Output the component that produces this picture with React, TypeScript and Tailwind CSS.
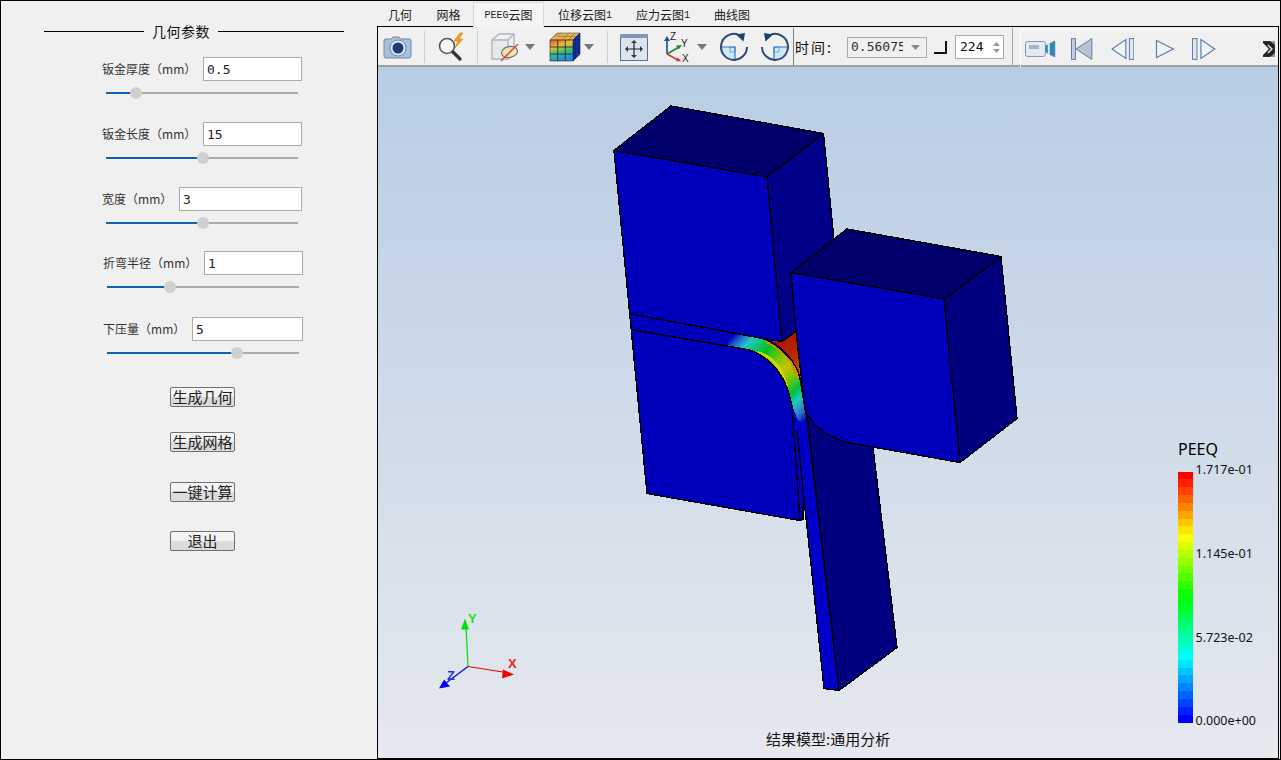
import React from 'react';

const params = [
  { label: '钣金厚度', value: '0.5', inputW: 'w-[99px]', fill: 30, row: 'mt-[16px] ml-[101px] w-[200px]', slider: 'ml-[105px]' },
  { label: '钣金长度', value: '15', inputW: 'w-[99px]', fill: 97, row: 'mt-[28px] ml-[101px] w-[200px]', slider: 'ml-[105px]' },
  { label: '宽度', value: '3', inputW: 'w-[123px]', fill: 97, row: 'mt-[28px] ml-[101px] w-[200px]', slider: 'ml-[105px]' },
  { label: '折弯半径', value: '1', inputW: 'w-[99px]', fill: 63, row: 'mt-[27px] ml-[102px] w-[200px]', slider: 'ml-[106px]' },
  { label: '下压量', value: '5', inputW: 'w-[111px]', fill: 130, row: 'mt-[29px] ml-[102px] w-[200px]', slider: 'ml-[106px]' },
];

const buttons = [
  { text: '生成几何', cls: 'mt-[33px]' },
  { text: '生成网格', cls: 'mt-[25px]' },
  { text: '一键计算', cls: 'mt-[30px]' },
  { text: '退出', cls: 'mt-[29px]' },
];

function Sep() {
  return <div className="w-px h-[32px] bg-[#d0d0d0]" />;
}

function DropArrow({ cls }: { cls: string }) {
  return (
    <svg className={cls} width="10" height="6" viewBox="0 0 10 6">
      <path d="M0 0h10L5 6z" fill="#777" />
    </svg>
  );
}

function CameraIcon() {
  return (
    <svg className="ml-[5px]" width="30" height="32" viewBox="0 0 30 32">
      <path d="M3 8h5l2-2h6l2 2h8a2 2 0 0 1 2 2v15a2 2 0 0 1-2 2H3a2 2 0 0 1-2-2V10a2 2 0 0 1 2-2z" fill="#a9c0dc" stroke="#6c87a8" />
      <circle cx="15" cy="17" r="8" fill="#dfe8f3" stroke="#6c87a8" />
      <circle cx="15" cy="17" r="5.5" fill="#1d3b78" />
    </svg>
  );
}

function ZoomIcon() {
  return (
    <svg className="ml-[10px]" width="32" height="32" viewBox="0 0 32 32">
      <circle cx="12" cy="15" r="7.5" fill="#f7f7f7" stroke="#555" strokeWidth="1.6" />
      <path d="M18 21l7 7" stroke="#333" strokeWidth="3.2" strokeLinecap="round" />
      <path d="M25 2l-6 8h4l-3 7 8-9h-4l4-6z" fill="#f0a020" stroke="#c87810" strokeWidth="0.5" />
    </svg>
  );
}

function CubeIcon() {
  return (
    <svg className="ml-[12px]" width="32" height="32" viewBox="0 0 32 32">
      <path d="M2 9L9 3H24V21L18 28H2z" fill="#f0f0f2" stroke="#aab4c2" strokeWidth="1.4" />
      <path d="M2 9H18V28M18 9L24 3" fill="none" stroke="#aab4c2" strokeWidth="1.4" />
      <path d="M3 10H17V27H3z" fill="#e6e8ec" />
      <ellipse cx="19.500" cy="21" rx="8" ry="5.500" transform="rotate(-12 19.500 21)" fill="#efe3b4" stroke="#6d7480" strokeWidth="1.2" />
      <path d="M11 30L28 13" stroke="#d8481c" strokeWidth="1.3" />
    </svg>
  );
}

function ColorCubeIcon() {
  return (
    <svg className="ml-[14px]" width="32" height="32" viewBox="0 0 32 32">
      <defs>
        <linearGradient id="cubeFront" x1="0" y1="0" x2="0.3" y2="1">
          <stop offset="0" stopColor="#e84a30" />
          <stop offset="0.350" stopColor="#f0c030" />
          <stop offset="0.650" stopColor="#40c070" />
          <stop offset="1" stopColor="#1c90e0" />
        </linearGradient>
      </defs>
      <path d="M1 9l7-7h23l-7 7z" fill="#e8b050" stroke="#556" strokeWidth="0.6" />
      <path d="M8 5.500h23M5 5.500l7-3.500M13 9l7-7M19 9l7-7" stroke="#7a6a40" strokeWidth="0.6" fill="none" />
      <path d="M24 9l7-7v21l-7 7z" fill="#1434a8" stroke="#112" strokeWidth="0.6" />
      <path d="M24 16l7-7M24 23l7-7M26.500 7v21M29 4.500v21" stroke="#0a1a60" strokeWidth="0.6" fill="none" />
      <rect x="1" y="9" width="23" height="21" fill="url(#cubeFront)" stroke="#223" strokeWidth="0.6" />
      <path d="M8.700 9v21M16.300 9v21M1 16h23M1 23h23" stroke="#263040" strokeWidth="0.9" fill="none" />
    </svg>
  );
}

function FitIcon() {
  return (
    <svg className="ml-[11px]" width="30" height="32" viewBox="0 0 30 32">
      <rect x="1.500" y="3.500" width="27" height="26" fill="#dfe3ea" stroke="#566f96" />
      <rect x="1" y="3" width="28" height="4" fill="#7f97b8" />
      <path d="M15 10v15M8 18h14" stroke="#223" strokeWidth="1.200" />
      <path d="M15 9l-3 3h6zM15 27l-3-3h6zM6 18l3-3v6zM24 18l-3-3v6z" fill="#223a5e" />
    </svg>
  );
}

function AxesIcon() {
  return (
    <svg className="ml-[13px]" width="30" height="32" viewBox="0 0 30 32">
      <path d="M5 23V8" stroke="#1f4fa0" strokeWidth="1.600" />
      <path d="M5 5l-3 5h6z" fill="#1f4fa0" />
      <path d="M5 23l12-7" stroke="#1a8a3a" strokeWidth="1.600" />
      <path d="M20 14l-6 .5 2.500 4z" fill="#1a8a3a" />
      <path d="M5 23l11 6" stroke="#d83030" strokeWidth="1.600" />
      <path d="M19 30.500l-5-.5 2-3.500z" fill="#d83030" />
      <text x="8" y="9" fontSize="10" fontFamily="Liberation Sans, sans-serif" fill="#222">Z</text>
      <text x="19" y="16" fontSize="10" fontFamily="Liberation Sans, sans-serif" fill="#222">Y</text>
      <text x="20" y="31" fontSize="10" fontFamily="Liberation Sans, sans-serif" fill="#222">X</text>
    </svg>
  );
}

function RotateIcon({ flip, cls }: { flip?: boolean; cls: string }) {
  return (
    <svg className={cls} width="30" height="32" viewBox="0 0 30 32">
      <g transform={flip ? 'matrix(-1 0 0 1 30 0)' : undefined}>
        <path d="M2 16h14v14A14 14 0 0 1 2 16z" fill="#cfe6f7" />
        <path d="M11 16h5v5h-5z" fill="none" stroke="#5a9ad0" strokeWidth="0.8" />
        <path d="M2 16h14v14" fill="none" stroke="#2a78c0" strokeWidth="1.200" />
        <path d="M19 3.500A13 13 0 1 0 28 16" fill="none" stroke="#2c4a72" strokeWidth="2" />
        <path d="M17 3.500l9-1.500-1.500 8.500z" fill="#1f3f6e" />
      </g>
    </svg>
  );
}

function ToolbarTime() {
  return (
    <>
      <span className="ml-px w-[38px] text-[14px] leading-none tracking-[2px] whitespace-nowrap text-[#111]">时间:</span>
      <div className="ml-[14px] flex h-[21px] w-[80px] items-center border border-[#ababab] bg-[#f0f0f0] pl-[3px]">
        {/* the combo box is narrower than its value, as in the app */}
        <span className="w-[52px] overflow-hidden font-['DejaVu_Sans_Mono',monospace] text-[13px] whitespace-nowrap text-[#333]">0.56075</span>
        <svg className="ml-[8px]" width="9" height="5" viewBox="0 0 9 5">
          <path d="M0 0h9L4.500 5z" fill="#888" />
        </svg>
      </div>
      <div className="ml-[7px] h-[13px] w-[13px] border-r-2 border-b-2 border-[#111] bg-[#f0f0f0]" />
      <div className="ml-[8px] flex h-[24px] w-[49px] items-center border border-[#ababab] bg-white pl-[4px]">
        <span className="w-[30px] font-['DejaVu_Sans_Mono',monospace] text-[13px] text-[#111]">224</span>
        <div className="ml-[3px] flex flex-col gap-[3px]">
          <svg width="7" height="4" viewBox="0 0 7 4"><path d="M3.500 0L7 4H0z" fill="#999" /></svg>
          <svg width="7" height="4" viewBox="0 0 7 4"><path d="M0 0h7L3.500 4z" fill="#999" /></svg>
        </div>
      </div>
    </>
  );
}

function PlayerBar() {
  const stroke = '#5f7da6';
  return (
    <div className="ml-[7px] flex h-[38px] w-[255px] items-center self-start border-t border-l border-white">
      <svg className="ml-[4px]" width="32" height="20" viewBox="0 0 32 20">
        <rect x="0.500" y="2.500" width="20" height="15" rx="2" fill="#e4eaf2" stroke="#7f94b2" />
        <rect x="4" y="6" width="10" height="4" fill="#a8b4c4" />
        <path d="M21 7l9-5v16l-9-5z" fill="#1e8fb8" stroke="#5f7da6" />
        <path d="M24 5v10" stroke="#d8e8f4" strokeWidth="2" />
      </svg>
      <svg className="ml-[14px]" width="22" height="24" viewBox="0 0 22 24">
        <rect x="0.500" y="1.500" width="4" height="21" fill="#c4cedc" stroke={stroke} />
        <path d="M21 1.500v21L5 12z" fill="#b8c2d0" stroke={stroke} />
      </svg>
      <svg className="ml-[18px]" width="24" height="24" viewBox="0 0 24 24">
        <path d="M15 2.500v19L1 12z" fill="#f0f3f7" stroke={stroke} strokeWidth="1.200" />
        <rect x="18.500" y="1.500" width="4.500" height="21" fill="#dfe5ee" stroke={stroke} />
      </svg>
      <svg className="ml-[21px]" width="20" height="24" viewBox="0 0 20 24">
        <path d="M1.500 3.500v17L18.500 12z" fill="#f0f3f7" stroke={stroke} strokeWidth="1.200" />
      </svg>
      <svg className="ml-[17px]" width="24" height="24" viewBox="0 0 24 24">
        <rect x="0.500" y="1.500" width="4.500" height="21" fill="#dfe5ee" stroke={stroke} />
        <path d="M9 2.500v19L23 12z" fill="#f0f3f7" stroke={stroke} strokeWidth="1.200" />
      </svg>
      <svg className="ml-[47px]" width="12" height="18" viewBox="0 0 12 18">
        <rect x="0" y="1" width="12" height="16" fill="#222" />
        <path d="M0 3l6 6-6 6z" fill="#f0f0f0" />
        <path d="M7 1h5v4zM12 13v4H7z" fill="#999" />
        <path d="M5 5l4 4-4 4" fill="none" stroke="#ddd" strokeWidth="1.500" />
      </svg>
    </div>
  );
}

function Legend() {
  const steps = 32;
  const color = (t: number) => {
    // rainbow from blue through cyan, green, yellow to red
    const s = Math.min(t * 4, 3.999);
    const f = s - Math.floor(s);
    const v = Math.round(f * 255);
    if (s < 1) return `rgb(0,${v},255)`;
    if (s < 2) return `rgb(0,255,${255 - v})`;
    if (s < 3) return `rgb(${v},255,0)`;
    return `rgb(255,${255 - v},0)`;
  };
  const labels = [
    { y: 473, t: '1.717e-01' },
    { y: 557, t: '1.145e-01' },
    { y: 641, t: '5.723e-02' },
    { y: 724, t: '0.000e+00' },
  ];
  return (
    <g>
      <text x="1178" y="454" fontSize="16" fontFamily="Noto Sans, sans-serif" fill="#000">PEEQ</text>
      {Array.from({ length: steps }).map((_, i) => (
        <rect key={i} x="1178" y={471 + (i * 251) / steps} width="15" height={251 / steps + 0.5} fill={color(1 - i / (steps - 1))} shapeRendering="crispEdges" />
      ))}
      {labels.map(l => (
        <text key={l.t} x="1195.500" y={l.y} fontSize="12.500" fontFamily="Noto Sans, sans-serif" fill="#111">{l.t}</text>
      ))}
    </g>
  );
}

function Triad() {
  return (
    <g fontFamily="Liberation Sans, sans-serif" fontSize="13" fontWeight="700">
      <path d="M468 666L466 626" stroke="#00e000" strokeWidth="1.200" />
      <path d="M465 618l-4 11h8z" fill="#00e000" />
      <text x="468" y="622" fill="#20e020">Y</text>
      <path d="M468 666l38 6" stroke="#f00000" strokeWidth="1.200" />
      <path d="M514 674l-11-5-1 9z" fill="#f00000" />
      <text x="508" y="667" fill="#f02020">X</text>
      <path d="M468 666l-24 18" stroke="#0000f0" strokeWidth="1.200" />
      <path d="M439 688l5-9 6 7z" fill="#0000f0" />
      <text x="447" y="679" fill="#2030e0">Z</text>
    </g>
  );
}

function Model() {
  return (
    <g stroke="#000" strokeWidth="1.400" strokeLinejoin="round" shapeRendering="crispEdges">
      {/* sheet edge below the right block */}
      <path d="M806 405L870 420L873 447L897 647L839 690z" fill="#000080" />
      {/* left block */}
      <path d="M614 150L671 105.500L823.500 133L767 176.500z" fill="#00006c" />
      <path d="M767 176.500L823.500 133L834 240L791 272L796 331L782 341z" fill="#000088" />
      <path d="M614 150L767 176.500L782 341L796 345L805 408L803 519L800 520L647 493z" fill="#0000bc" />
      {/* sheet front going down */}
      <path d="M794 415L806 410L839 690L824 688z" fill="#0000c8" stroke="none" />
      {/* stress band */}
      <path d="M728 331L763 338C782 346 797 362 800 378L808 424L798 420L792 405L788 390C782 370 764 353 747 349L728 346z" fill="url(#band)" stroke="none" />
      <path d="M768 338L782 341L796 331L801 378C796 360 784 346 768 338z" fill="url(#wedge)" stroke="none" />
      <path d="M766 341C782 348 794 362 798 378" fill="none" stroke="#d89000" strokeWidth="2.500" />
      <path d="M758 352C772 356 782 368 787 386" fill="none" stroke="#d8d800" strokeWidth="2.500" />
      {/* seams */}
      <g fill="none">
        <path d="M629 313L763 338L782 341L796 331" />
        <path d="M763 338C782 346 797 362 800 378L805 408L807 418L839 690" />
        <path d="M631 329L747 349C764 353 782 370 788 390L792 405L800 520" />
        <path d="M797 430L824 688L839 690" />
      </g>
      {/* right block */}
      <path d="M791 272L847 228.500L1001 256L944 298.500z" fill="#00006c" />
      <path d="M944 298.500L1001 256L1017 418L960 462z" fill="#000080" />
      <path d="M791 272L944 298.500L960 462L859 444C840 442 820 433 808 415L805 408L796 331z" fill="#0000bc" />
    </g>
  );
}

export default function App() {
  return (
    <div className="flex h-[760px] w-[1281px] overflow-hidden border border-black bg-[#f0f0f0] font-['Noto_Sans_CJK_SC','Liberation_Sans',sans-serif] text-[12px] text-[#222]">
      <aside className="flex w-[376px] shrink-0 flex-col">
        <div className="ml-[43px] mt-[20px] flex h-[20px] w-[300px] items-center">
          <div className="h-px w-[100px] bg-black" />
          <span className="mx-auto text-[14px] leading-none tracking-[0.5px] text-[#111]">几何参数</span>
          <div className="h-px w-[126px] bg-black" />
        </div>
        {params.map(p => (
          <React.Fragment key={p.label}>
            <div className={`flex h-[24px] items-center justify-between ${p.row}`}>
              <span className="whitespace-nowrap text-[#333]">{p.label}（mm）</span>
              <input readOnly value={p.value} className={`h-[24px] border border-[#ababab] bg-white px-[3px] font-['DejaVu_Sans_Mono',monospace] text-[13px] text-[#222] outline-none ${p.inputW}`} />
            </div>
            <div className={`mt-[11px] flex h-[2px] w-[192px] items-center ${p.slider}`}>
              <div className="h-[2px] bg-[#0f62b0]" style={{ width: p.fill }} />
              <div className="-mx-[6px] z-10 h-[12px] w-[12px] shrink-0 rounded-full bg-[#d0d0d0]" />
              <div className="h-[2px] flex-1 bg-[#ababab]" />
            </div>
          </React.Fragment>
        ))}
        {buttons.map(b => (
          <button key={b.text} className={`ml-[169px] flex h-[20px] w-[65px] items-center justify-center rounded-[2px] border border-[#707070] bg-linear-to-b from-[#f4f4f4] from-50% to-[#dcdcdc] to-50% pb-[2px] text-[15px] leading-none text-[#222] ${b.cls}`}>
            {b.text}
          </button>
        ))}
      </aside>

      <main className="flex w-[902px] shrink-0 flex-col">
        <nav className="flex h-[25px] items-end whitespace-nowrap">
          <span className="-ml-px flex h-[22px] w-[48px] items-center justify-center text-[12px] text-[#222]">几何</span>
          <span className="flex h-[22px] w-[49px] items-center justify-center text-[12px] text-[#222]">网格</span>
          <span className="-mb-px z-10 flex h-[25px] w-[71px] items-center justify-center border border-b-0 border-[#d9d9d9] bg-[#f5f5f5] text-[12px] text-[#222]">
            <span className="font-['Liberation_Mono',monospace] text-[10px]">PEEG</span>云图
          </span>
          <span className="ml-[14px] flex h-[22px] items-center text-[12px] text-[#222]">位移云图<span className="font-['Liberation_Mono',monospace] text-[10px]">1</span></span>
          <span className="ml-[24px] flex h-[22px] items-center text-[12px] text-[#222]">应力云图<span className="font-['Liberation_Mono',monospace] text-[10px]">1</span></span>
          <span className="ml-[24px] flex h-[22px] items-center text-[12px] text-[#222]">曲线图</span>
        </nav>
        <div className="flex h-[733px] flex-col border border-black">
          <div className="flex h-[40px] shrink-0 items-center border-b-2 border-[#a0a0a0] bg-[#f0f0f0] pt-[2px]">
            <CameraIcon />
            <div className="ml-[11px]"><Sep /></div>
            <ZoomIcon />
            <div className="ml-[10px]"><Sep /></div>
            <CubeIcon />
            <DropArrow cls="ml-[3px]" />
            <ColorCubeIcon />
            <DropArrow cls="ml-[3px]" />
            <div className="ml-[13px]"><Sep /></div>
            <FitIcon />
            <AxesIcon />
            <DropArrow cls="ml-[5px]" />
            <RotateIcon cls="ml-[12px]" />
            <RotateIcon flip cls="ml-[11px]" />
            <div className="ml-[3px] h-[38px] w-px bg-[#808080]" />
            <ToolbarTime />
            <div className="ml-[8px] h-[38px] w-px bg-[#a0a0a0]" />
            <PlayerBar />
          </div>
          <div className="min-h-0 flex-1 bg-linear-to-b from-[#b8cde4] to-[#e6e9ee]">
            <svg className="block h-full w-full" viewBox="378 67 900 690">
              <defs>
                <linearGradient id="band" gradientUnits="userSpaceOnUse" x1="728" y1="340" x2="806" y2="420">
                  <stop offset="0" stopColor="#0000c0" />
                  <stop offset="0.060" stopColor="#2060c8" />
                  <stop offset="0.140" stopColor="#20c8c8" />
                  <stop offset="0.300" stopColor="#00c020" />
                  <stop offset="0.440" stopColor="#80c800" />
                  <stop offset="0.540" stopColor="#c8c000" />
                  <stop offset="0.640" stopColor="#70c800" />
                  <stop offset="0.740" stopColor="#00c040" />
                  <stop offset="0.820" stopColor="#20c8c8" />
                  <stop offset="0.920" stopColor="#3070c8" />
                  <stop offset="1" stopColor="#0000c0" />
                </linearGradient>
                <linearGradient id="wedge" gradientUnits="userSpaceOnUse" x1="786" y1="340" x2="800" y2="380">
                  <stop offset="0" stopColor="#b01800" />
                  <stop offset="0.500" stopColor="#b83000" />
                  <stop offset="1" stopColor="#c08000" />
                </linearGradient>
              </defs>
              <Model />
              <Triad />
              <Legend />
              <text x="766" y="744" fontSize="15" fontFamily="Noto Sans CJK SC, sans-serif" fill="#111">结果模型:通用分析</text>
            </svg>
          </div>
        </div>
      </main>
    </div>
  );
}
